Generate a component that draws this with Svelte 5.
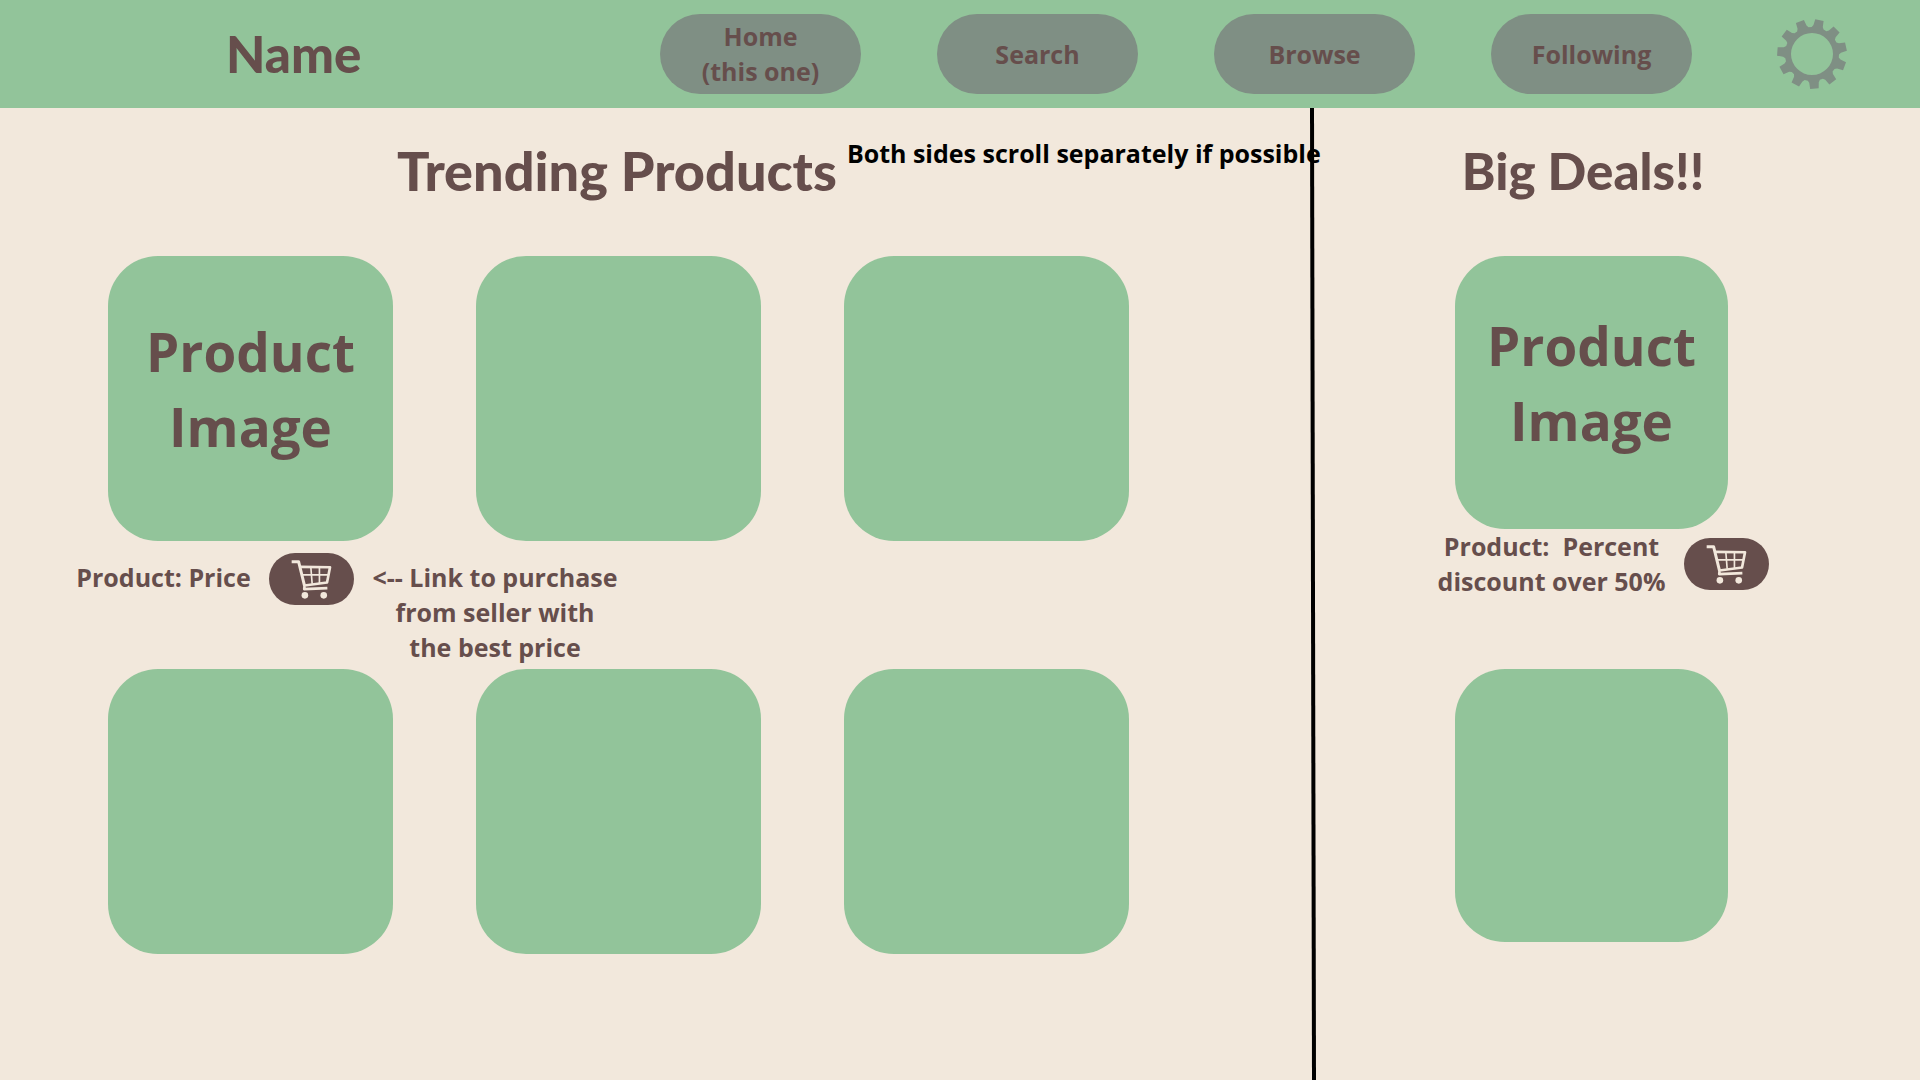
<script>
  const links = [
    { lines: ['Home', '(this one)'] },
    { lines: ['Search'] },
    { lines: ['Browse'] },
    { lines: ['Following'] }
  ];

  const trending = [
    { label: true, caption: true },
    {},
    {},
    {},
    {},
    {}
  ];

  // Eleven tapered teeth around a ring, centred on the origin.
  const teeth = 11;
  const points = [];
  for (let i = 0; i < teeth; i++) {
    const mid = 86 + (i * 360) / teeth;
    for (const [offset, radius] of [[-13, 27], [-9.5, 29], [-7, 35], [7, 35], [9.5, 29], [13, 27]]) {
      const a = ((mid + offset) * Math.PI) / 180;
      points.push(`${(radius * Math.cos(a)).toFixed(2)} ${(radius * Math.sin(a)).toFixed(2)}`);
    }
  }
  const gear = `M${points.join('L')}Z M21 0A21 21 0 1 0 -21 0A21 21 0 1 0 21 0Z`;
</script>

{#snippet cart()}
  <button class="cart" aria-label="Purchase">
    <svg viewBox="93 42 124 122" aria-hidden="true">
      <g fill="none" stroke="currentColor" stroke-linejoin="round">
        <path d="M95 49H116L134 122" stroke-width="9" />
        <path d="M121 65L211 66L202 112L134 121L133 132L203 129" stroke-width="8" />
        <path d="M127 89H206M153 66L157 116M179 66L179 114" stroke-width="5" />
      </g>
      <circle cx="135" cy="151" r="10" fill="currentColor" />
      <circle cx="192" cy="151" r="10" fill="currentColor" />
    </svg>
  </button>
{/snippet}

<div class="page">
  <header>
    <a class="brand" href="#home">Name</a>
    <nav>
      {#each links as link}
        <a class="pill" href="#{link.lines[0].toLowerCase()}">
          {#each link.lines as line}<span>{line}</span>{/each}
        </a>
      {/each}
    </nav>
    <button class="settings" aria-label="Settings">
      <svg viewBox="-36 -36 72 72" aria-hidden="true"><path d={gear} fill="currentColor" fill-rule="evenodd" /></svg>
    </button>
  </header>

  <main>
    <section class="trending">
      <div class="title">
        <h1>Trending Products</h1>
        <p class="hint">Both sides scroll separately if possible</p>
      </div>
      <div class="scroller">
        <div class="grid">
          {#each trending as item}
            <article>
              <div class="tile">{#if item.label}<span>Product</span><span>Image</span>{/if}</div>
              {#if item.caption}
                <div class="caption">
                  <p class="price">Product: Price</p>
                  {@render cart()}
                  <p class="note">&lt;-- Link to purchase<br />from seller with<br />the best price</p>
                </div>
              {/if}
            </article>
          {/each}
        </div>
      </div>
    </section>

    <svg class="divider" viewBox="0 0 6 972" preserveAspectRatio="none" aria-hidden="true">
      <path d="M2 0L4 972" stroke="#000" stroke-width="4" />
    </svg>

    <section class="deals">
      <div class="title"><h2>Big Deals!!</h2></div>
      <div class="scroller">
        <article>
          <div class="tile"><span>Product</span><span>Image</span></div>
          <div class="caption">
            <p>Product:&nbsp; Percent<br />discount over 50%</p>
            {@render cart()}
          </div>
        </article>
        <article>
          <div class="tile"></div>
        </article>
      </div>
    </section>
  </main>
</div>

<style>
  :global(body) {
    margin: 0;
    background: #f2e8dc;
  }
  .page {
    display: grid;
    grid-template-rows: auto minmax(0, 1fr);
    height: 100vh;
    color: #664e4c;
    font-family: 'Open Sans', 'Noto Sans', sans-serif;
    font-size: 25px;
    font-weight: 700;
    line-height: 35px;
  }
  header {
    display: flex;
    align-items: center;
    min-height: 108px;
    padding: 0 72px 0 226px;
    box-sizing: border-box;
    background: #92c49a;
  }
  a {
    color: inherit;
    text-decoration: none;
  }
  button {
    padding: 0;
    border: 0;
    cursor: pointer;
  }
  .brand,
  h1,
  h2 {
    font-family: Lato, 'Open Sans', sans-serif;
    font-size: 51px;
    font-weight: 900;
    line-height: 70px;
  }
  nav {
    display: flex;
    gap: 76px;
    margin: 0 84px 0 auto;
  }
  .pill {
    display: flex;
    flex-direction: column;
    align-items: center;
    justify-content: center;
    width: 201px;
    height: 80px;
    border-radius: 40px;
    background: #7f8f84;
  }
  .settings {
    width: 72px;
    height: 72px;
    background: none;
    color: #7f8f84;
  }
  svg {
    display: block;
  }
  main {
    display: grid;
    grid-template-columns: minmax(0, 1310fr) 6px minmax(0, 604fr);
  }
  section {
    display: flex;
    flex-direction: column;
    min-height: 0;
  }
  .title {
    display: flex;
    height: 148px;
    padding-top: 28px;
    box-sizing: border-box;
  }
  h1,
  h2,
  p {
    margin: 0;
    white-space: nowrap;
  }
  h1 {
    font-size: 54px;
  }
  .trending .title {
    gap: 10px;
    padding-left: 397px;
  }
  .hint {
    z-index: 1;
    color: #000;
  }
  .scroller {
    flex: 1;
    min-height: 0;
    overflow: hidden auto;
  }
  .grid {
    display: grid;
    grid-template-columns: repeat(3, minmax(0, 1fr));
    gap: 0 83px;
    padding: 0 181px 0 108px;
  }
  article {
    height: 413px;
  }
  .tile {
    display: flex;
    flex-direction: column;
    align-items: center;
    justify-content: center;
    aspect-ratio: 1;
    padding-bottom: 20px;
    box-sizing: border-box;
    border-radius: 50px;
    background: #92c49a;
    font-size: 53px;
    line-height: 75px;
  }
  .caption {
    display: grid;
    grid-template-columns: 173px 85px 244px;
    gap: 19px;
    align-items: start;
    justify-content: start;
    justify-items: center;
    margin: 12px 0 0 -31px;
    text-align: center;
  }
  .price,
  .note {
    padding-top: 7px;
  }
  .cart {
    display: grid;
    place-items: center;
    width: 85px;
    height: 52px;
    border-radius: 26px;
    background: #664e4c;
    color: #f2e8dc;
  }
  .cart svg {
    width: 41px;
    height: 41px;
  }
  .divider {
    width: 6px;
    height: 100%;
  }
  .deals .title {
    justify-content: center;
    padding-right: 70px;
  }
  .deals .scroller {
    padding: 0 192px 0 139px;
  }
  .deals .caption {
    grid-template-columns: 227px 85px;
    margin: 0 0 0 -17px;
  }
  .deals .cart {
    margin-top: 9px;
  }
</style>
